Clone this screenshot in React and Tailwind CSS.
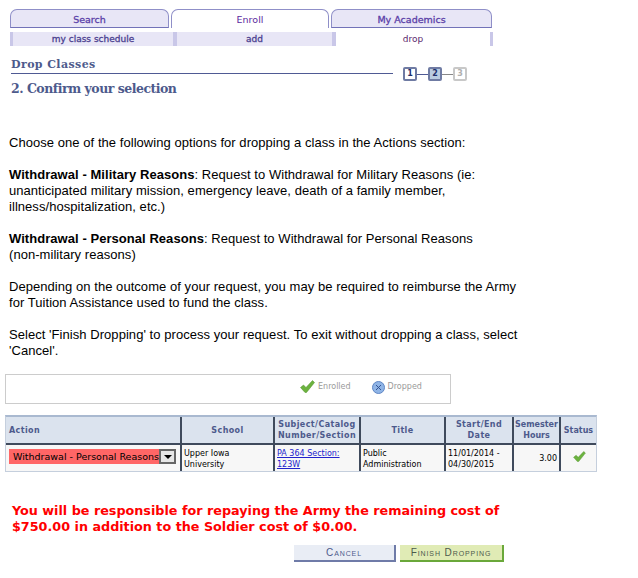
import { X } from "lucide-react";

const verdana = "font-['DejaVu_Sans',Verdana,sans-serif]";

function Tab({ label, active, width }) {
  return (
    <div
      className={`${width} h-[19px] border-t border-x border-[#8f8fc8] rounded-t-[7px] flex items-center justify-center pt-[3px] text-[9.5px] ${
        active
          ? "bg-white text-[#5b2a9e] border-b-0"
          : "bg-[#e8e6f6] text-[#5b3fa8] [-webkit-text-stroke:0.3px] border-b border-b-[#7272b8]"
      }`}
    >
      {label}
    </div>
  );
}

function SubTab({ label, active, width, border }) {
  return (
    <div
      className={`${width} ${border} h-[14px] pt-[1px] flex items-center justify-center text-[9px] border-[#c9c7e8] ${
        active ? "bg-white text-[#5b2a6e]" : "bg-[#e8e6f6] text-[#4b3f90] [-webkit-text-stroke:0.3px]"
      }`}
    >
      {label}
    </div>
  );
}

function Step({ n, state }) {
  const styles = {
    done: "bg-white border-[#6f7ba3] text-[#1f2f6b]",
    current: "bg-[#b9cbe0] border-[#6f7ba3] text-[#1f2f6b]",
    next: "bg-white border-[#c8c8c8] text-[#b0b0b0]",
  };
  return (
    <div
      className={`w-[14px] h-[14px] border-2 rounded-[2px] flex items-center justify-center text-[8px] font-bold leading-none ${styles[state]}`}
    >
      {n}
    </div>
  );
}

function GreenCheck({ width = 15, height = 13 }) {
  return (
    <svg width={width} height={height} viewBox="0 0 15 13">
      <path d="M0.5 7.5 L3.5 5 L6 7.5 L12.5 0.5 L14.5 2.5 L6.5 12.5 L5 12.5 Z" fill="#6cb33f" stroke="#4f8f2a" strokeWidth="0.5" />
    </svg>
  );
}

function Th({ width, children, left, className = "tracking-[0.4px]" }) {
  return (
    <div
      className={`${width} ${className} shrink-0 bg-[#dbe3ee] border-r-2 border-b-2 border-[#3f4a5c] last:border-r-0 flex items-center text-[8px] leading-[11px] font-bold text-[#4d5a8c] ${
        left ? "justify-start pl-[3px]" : "justify-center text-center"
      }`}
    >
      <span>{children}</span>
    </div>
  );
}

function Td({ width, children, className = "" }) {
  return (
    <div
      className={`${width} shrink-0 border-r-2 border-[#3f4a5c] last:border-r-0 text-[8px] leading-[11px] text-black pl-[2px] pt-[3px] ${className}`}
    >
      {children}
    </div>
  );
}

export default function App() {
  return (
    <div className={`w-[638px] h-[578px] bg-white overflow-hidden ${verdana}`}>
      {/* Tabs */}
      <div className="flex gap-[2px] pl-[10px] pt-[9px]">
        <Tab label="Search" width="w-[159px]" />
        <Tab label="Enroll" width="w-[158px]" active />
        <Tab label="My Academics" width="w-[161px]" />
      </div>
      <div className="flex pl-[10px] mt-[4px]">
        <SubTab label="my class schedule" width="w-[163px]" border="border-l-[3px]" />
        <SubTab label="add" width="w-[159px]" border="border-l-4" />
        <SubTab label="drop" width="w-[158px]" border="border-l-4" active />
        <div className="w-[3px] h-[14px] bg-[#c9c7e8]" />
      </div>

      {/* Heading */}
      <div className="flex items-end pl-[11px] mt-[9px] h-[24px]">
        <div className="w-[382px] h-[16px] border-b border-[#4f5a94] mb-[5px] font-['DejaVu_Serif',serif] text-[11px] font-bold text-[#4d5a8c] tracking-[0.4px] leading-[13px]">
          Drop Classes
        </div>
        <div className="flex items-center ml-[10px] mb-[-2px]">
          <Step n="1" state="done" />
          <div className="w-[11px] h-px bg-[#4f5a94]" />
          <Step n="2" state="current" />
          <div className="w-[11px] h-px bg-[#888]" />
          <Step n="3" state="next" />
        </div>
      </div>
      <h1 className="pl-[11px] mt-[1px] font-['DejaVu_Serif',serif] text-[12.5px] leading-[18px] font-bold text-[#4d5a8c] tracking-[-0.5px]">
        2. Confirm your selection
      </h1>

      {/* Instructions */}
      <div className="pl-[9px] mt-[37px] font-['Liberation_Sans',Arial,sans-serif] text-[13px] leading-[16px] tracking-[0.05px] text-black">
        <p>Choose one of the following options for dropping a class in the Actions section:</p>
        <p className="mt-[16px]">
          <b>Withdrawal - Military Reasons</b>: Request to Withdrawal for Military Reasons (ie:
          <br />
          unanticipated military mission, emergency leave, death of a family member,
          <br />
          illness/hospitalization, etc.)
        </p>
        <p className="mt-[16px]">
          <b>Withdrawal - Personal Reasons</b>: Request to Withdrawal for Personal Reasons
          <br />
          (non-military reasons)
        </p>
        <p className="mt-[16px]">
          Depending on the outcome of your request, you may be required to reimburse the Army
          <br />
          for Tuition Assistance used to fund the class.
        </p>
        <p className="mt-[16px]">
          Select 'Finish Dropping' to process your request. To exit without dropping a class, select
          <br />
          'Cancel'.
        </p>
      </div>

      {/* Legend */}
      <div className="ml-[5px] mt-[15px] w-[446px] h-[30px] border border-[#cccccc] flex items-start pt-[5px] pl-[294px] text-[8px] leading-[11px] text-[#9a9a9a]">
        <div className="flex items-start gap-[3px]">
          <GreenCheck />
          <span className="mt-[1px]">Enrolled</span>
        </div>
        <div className="flex items-start gap-[3px] ml-[21px]">
          <span className="w-[13px] h-[13px] mt-[1px] rounded-full bg-[#8fb4e6] border border-[#5f86c4] flex items-center justify-center">
            <X size={9} strokeWidth={2.5} className="text-[#2f4f8f]" />
          </span>
          <span className="mt-[1px]">Dropped</span>
        </div>
      </div>

      {/* Table */}
      <div className="ml-[5px] mt-[11px] w-[592px] border border-[#c5cfdd] border-t-2 border-t-[#a9b9d0]">
        <div className="flex h-[28px]">
          <Th width="w-[176px]" left>Action</Th>
          <Th width="w-[93px]">School</Th>
          <Th width="w-[86px]">Subject/Catalog Number/Section</Th>
          <Th width="w-[85px]">Title</Th>
          <Th width="w-[68px]">Start/End Date</Th>
          <Th width="w-[47px]" className="tracking-normal">Semester Hours</Th>
          <Th width="w-[35px]" className="tracking-normal">Status</Th>
        </div>
        <div className="flex h-[26px] bg-[#f7f7f7]">
          <Td width="w-[176px]" className="pl-[3px] pt-[4px]">
            <div className="w-[167px] h-[15px] bg-[#ff6666] flex items-center justify-between font-['DejaVu_Sans',sans-serif] text-[9.5px] pl-[4px]">
              <span>Withdrawal - Personal Reasons</span>
              <span className="w-[17px] h-[15px] bg-[#e6e6e6] border-2 border-[#666] flex items-center justify-center">
                <span className="border-x-[4px] border-x-transparent border-t-[4px] border-t-black" />
              </span>
            </div>
          </Td>
          <Td width="w-[93px]">Upper Iowa<br />University</Td>
          <Td width="w-[86px]">
            <span className="text-[#2222cc] underline">PA 364 Section:<br />123W</span>
          </Td>
          <Td width="w-[85px]">Public<br />Administration</Td>
          <Td width="w-[68px]">11/01/2014 -<br />04/30/2015</Td>
          <Td width="w-[47px]" className="text-right pr-[2px] pt-[8px]">3.00</Td>
          <Td width="w-[35px]" className="flex justify-center pl-0 pt-[6px]">
            <GreenCheck width={13} height={11} />
          </Td>
        </div>
      </div>

      {/* Warning */}
      <p className="pl-[12px] mt-[31px] text-[12.75px] leading-[16px] font-bold text-[#ff0000]">
        You will be responsible for repaying the Army the remaining cost of
        <br />
        $750.00 in addition to the Soldier cost of $0.00.
      </p>

      {/* Buttons */}
      <div className="flex gap-[4px] pl-[294px] mt-[10px] font-['Liberation_Sans',Arial,sans-serif] text-[10px] tracking-[0.9px] [font-variant:small-caps]">
        <button className="w-[102px] h-[17px] bg-[#e9edf5] border-r-2 border-b-2 border-[#6f7ba8] text-[#4d5a8c]">
          Cancel
        </button>
        <button className="w-[104px] h-[17px] bg-[#e0ebb5] border-r-2 border-b-2 border-[#6aa83a] text-[#4d5a4c]">
          Finish Dropping
        </button>
      </div>
    </div>
  );
}
